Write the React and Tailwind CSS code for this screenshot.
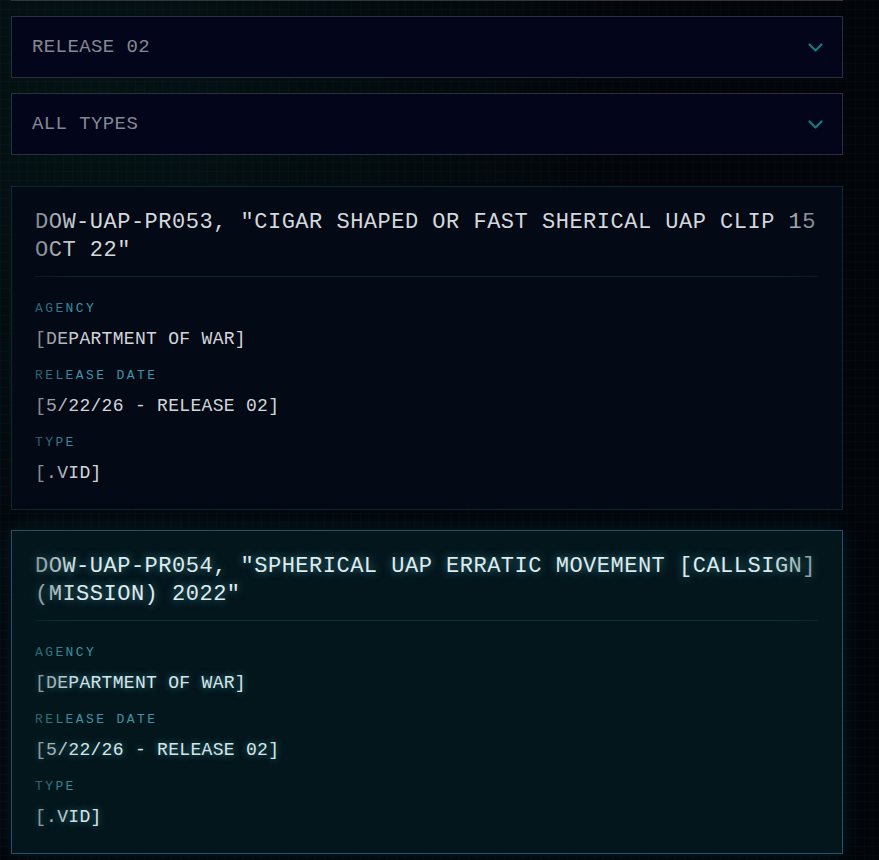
import React from "react";

const records = [
  {
    id: "DOW-UAP-PR053",
    title: "DOW-UAP-PR053, \"CIGAR SHAPED OR FAST SHERICAL UAP CLIP 15 OCT 22\"",
    agency: "[DEPARTMENT OF WAR]",
    date: "[5/22/26 - RELEASE 02]",
    type: "[.VID]",
    active: false,
  },
  {
    id: "DOW-UAP-PR054",
    title: "DOW-UAP-PR054, \"SPHERICAL UAP ERRATIC MOVEMENT [CALLSIGN] (MISSION) 2022\"",
    agency: "[DEPARTMENT OF WAR]",
    date: "[5/22/26 - RELEASE 02]",
    type: "[.VID]",
    active: true,
  },
];

function Chevron() {
  return (
    <svg width="15" height="9" viewBox="0 0 15 9" fill="none">
      <polyline
        points="1.5,1.5 7.5,7.5 13.5,1.5"
        stroke="#1a7880"
        strokeWidth="2.2"
        strokeLinecap="round"
        strokeLinejoin="round"
      />
    </svg>
  );
}

function Select({ label }) {
  return (
    <button className="mt-[15px] flex h-[62px] w-full items-center justify-between border border-[#2a2f3d] bg-[#03051a] pl-5 pr-[19px] text-left">
      <span className="font-['Liberation_Mono',monospace] text-[19px] tracking-[0.4px] text-[#838893]">
        {label}
      </span>
      <Chevron />
    </button>
  );
}

function Field({ label, value, active, first }) {
  return (
    <div className={first ? "" : "mt-[17px]"}>
      <div className="font-['Liberation_Mono',monospace] text-[13px] leading-4 tracking-[2.4px] text-[#3d96a9]">
        {label}
      </div>
      <div
        className={
          active
            ? "mt-[10px] font-['Liberation_Mono',monospace] text-[18px] leading-6 tracking-[0.3px] text-[#d9e5e7] [text-shadow:0_0_7px_rgba(90,200,220,0.55)]"
            : "mt-[10px] font-['Liberation_Mono',monospace] text-[18px] leading-6 tracking-[0.3px] text-[#d3d6da]"
        }
      >
        {value}
      </div>
    </div>
  );
}

function RecordCard({ rec, className }) {
  const active = rec.active;
  return (
    <div
      className={
        active
          ? "relative border border-[#2b4f68] bg-[#03161c] pl-[23px] pr-6 pt-[22px] pb-[24px] shadow-[0_0_24px_rgba(20,110,130,0.18)] " + className
          : "relative border border-[#0d2733] bg-[#030915] pl-[23px] pr-6 pt-[22px] pb-[24px] " + className
      }
    >
      <h2
        className={
          active
            ? "font-['Liberation_Mono',monospace] text-[22px] leading-7 font-normal tracking-[0.5px] text-[#e0eaeb] [text-shadow:0_0_9px_rgba(90,200,220,0.6)]"
            : "font-['Liberation_Mono',monospace] text-[22px] leading-7 font-normal tracking-[0.5px] text-[#d4d7db]"
        }
      >
        {rec.title}
      </h2>
      <div className={active ? "mt-[11px] h-px bg-[#0e3038]" : "mt-[11px] h-px bg-[#0c2630]"} />
      <div className="pt-[24px]">
        <Field label="AGENCY" value={rec.agency} active={active} first />
        <Field label="RELEASE DATE" value={rec.date} active={active} />
        <Field label="TYPE" value={rec.type} active={active} />
      </div>
      <div
        className={
          active
            ? "pointer-events-none absolute inset-0 bg-[linear-gradient(90deg,rgba(3,22,28,0.55)_1%,rgba(3,22,28,0)_8%,rgba(3,22,28,0)_91%,rgba(3,22,28,0.55)_99%)]"
            : "pointer-events-none absolute inset-0 bg-[linear-gradient(90deg,rgba(3,9,21,0.55)_1%,rgba(3,9,21,0)_8%,rgba(3,9,21,0)_91%,rgba(3,9,21,0.55)_99%)]"
        }
      />
    </div>
  );
}

export default function App() {
  return (
    <div className="min-h-screen bg-[#02050a] bg-[linear-gradient(rgba(120,170,200,0.025)_1px,transparent_1px),linear-gradient(90deg,rgba(120,170,200,0.025)_1px,transparent_1px),radial-gradient(ellipse_at_10%_12%,rgba(8,44,40,0.35),transparent_50%)] bg-[length:9px_9px,9px_9px,100%_100%]">
      <div className="ml-[11px] w-[832px] pb-10">
        <div className="h-px bg-[#30353f]" />
        <Select label="RELEASE 02" />
        <Select label="ALL TYPES" />
        <div className="mt-[31px]">
          <RecordCard rec={records[0]} className="" />
          <RecordCard rec={records[1]} className="mt-5" />
        </div>
      </div>
    </div>
  );
}
